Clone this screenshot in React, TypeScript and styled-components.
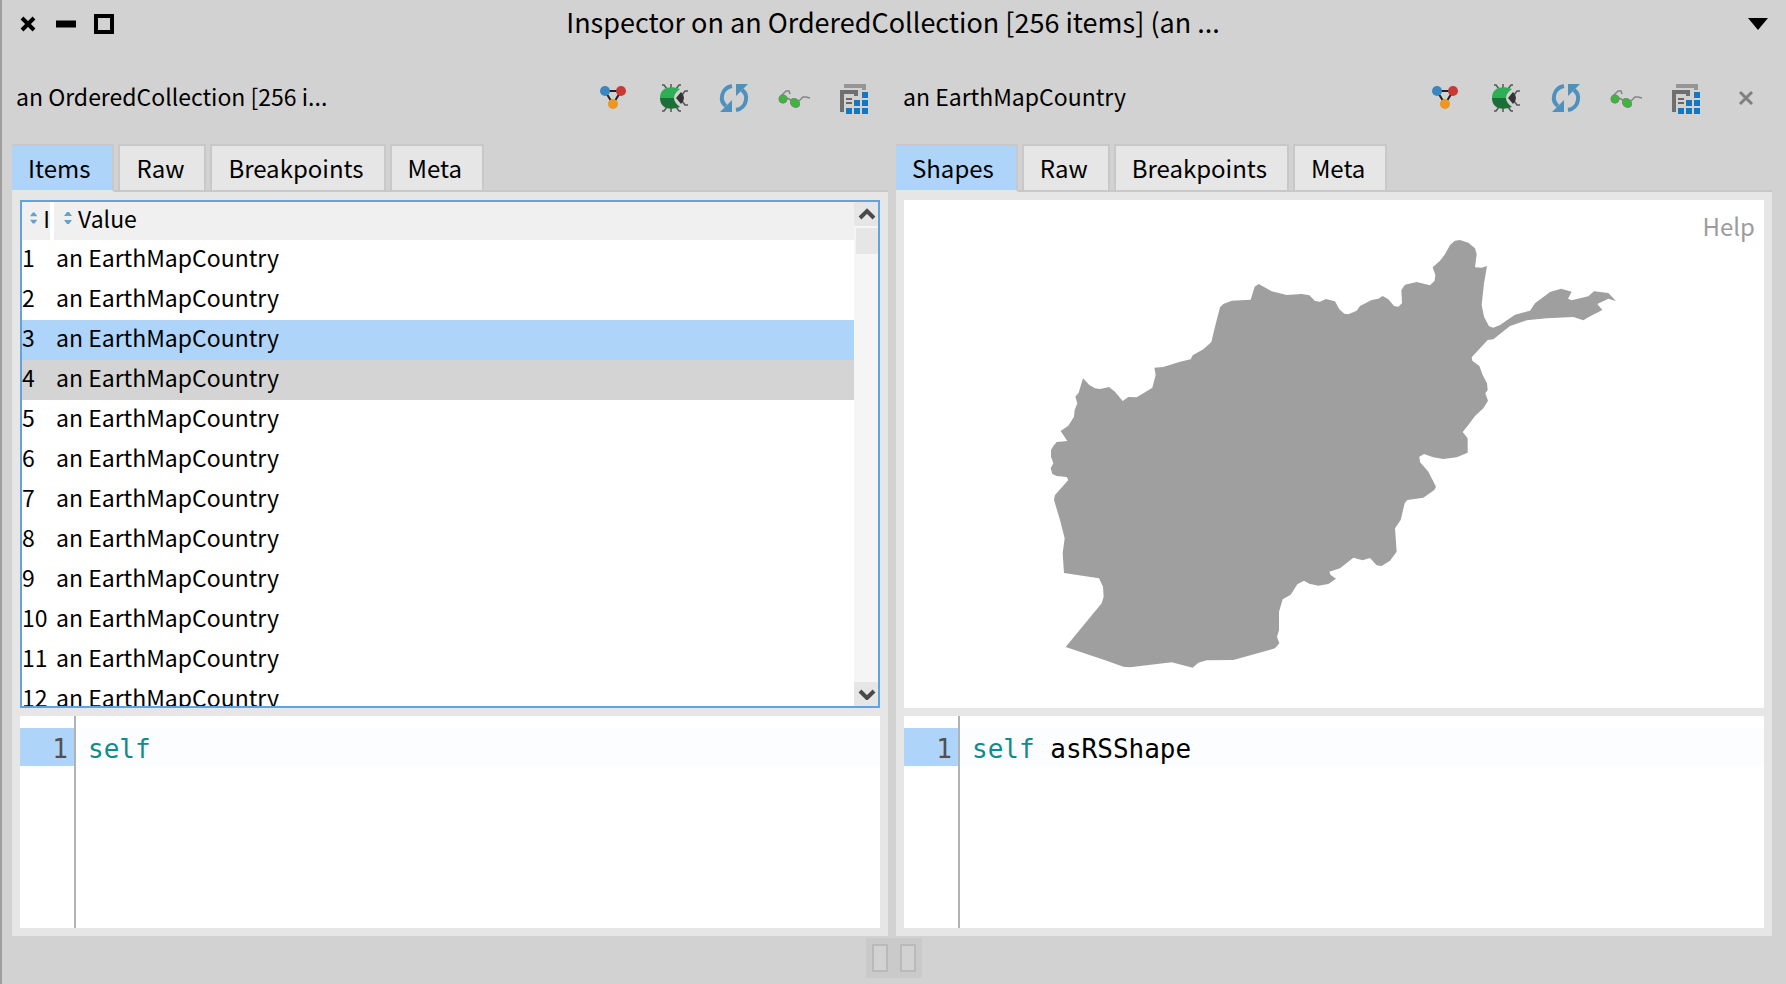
import React from "react";
import styled, { createGlobalStyle, css } from "styled-components";

const Global = createGlobalStyle`
  * { box-sizing: border-box; }
  body { margin: 0; background: #d2d2d2; }
  button { font: inherit; color: inherit; border: 0; padding: 0; background: none; cursor: pointer; }
`;

const Window = styled.main`
  display: flex;
  flex-direction: column;
  height: 100vh;
  border-left: 2px solid #9f9f9f;
  background: #d2d2d2;
  color: #000;
  font-family: "Noto Sans CJK SC", "Open Sans", sans-serif;
  font-size: 24px;
  line-height: 36px;
`;

const TitleBar = styled.header`
  display: grid;
  grid-template-columns: 1fr auto 1fr;
  align-items: center;
  height: 48px;
  padding: 0 18px 0 16px;
`;

const WindowButtons = styled.div`
  display: flex;
  gap: 18px;
`;

const IconButton = styled.button`
  display: flex;
  svg { display: block; }
`;

const WindowTitle = styled.h1`
  margin: 0;
  padding-bottom: 4px;
  font-size: 27px;
  font-weight: 400;
`;

const MenuButton = styled(IconButton)`
  justify-self: end;
`;

const Panes = styled.div`
  flex: 1;
  min-height: 0;
  display: grid;
  grid-template-columns: minmax(0, 1fr) minmax(0, 1fr);
  grid-template-rows: minmax(0, 1fr);
  gap: 8px;
  padding: 0 14px 0 10px;
`;

const Pane = styled.section`
  display: flex;
  flex-direction: column;
  min-height: 0;
`;

const PaneHeader = styled.div<{ $left: number; $right: number }>`
  display: flex;
  align-items: center;
  height: 96px;
  padding: 0 ${(p) => p.$right}px 0 ${(p) => p.$left}px;
`;

const PaneTitle = styled.h2`
  flex: 1;
  margin: 0;
  font-size: 23px;
  font-weight: 400;
  white-space: nowrap;
`;

const Tools = styled.div`
  display: flex;
  gap: 28px;
  padding-top: 4px;
`;

const TabBar = styled.div`
  display: flex;
  gap: 4px;
  flex-shrink: 0;
  height: 48px;
  border-bottom: 2px solid #c8c8c8;
`;

const Tab = styled.button<{ $active?: boolean }>`
  height: 46px;
  padding: 0 20px 0 16px;
  border: 2px solid #c8c8c8;
  border-bottom: 0;
  background: #e6e6e6;
  ${(p) =>
    p.$active &&
    css`
      height: 48px;
      padding-right: 22px;
      border-left: 0;
      border-bottom: 2px solid #e6e6e6;
      background: #aed4fa;
    `}
`;

const Page = styled.div`
  flex: 1;
  min-height: 0;
  display: grid;
  grid-template-rows: minmax(0, 508fr) minmax(0, 212fr);
  gap: 8px;
  padding: 8px;
  background: #e6e6e6;
`;

const ListBox = styled.div`
  display: flex;
  min-height: 0;
  border: 2px solid #61a3e0;
  background: #fff;
`;

const ListView = styled.div`
  flex: 1;
  overflow: hidden;
`;

const List = styled.table`
  width: 100%;
  table-layout: fixed;
  border-spacing: 0;
  font-size: 23px;
  line-height: 34px;
  text-align: left;
`;

const ColumnHead = styled.th<{ $first?: boolean }>`
  width: ${(p) => (p.$first ? "32px" : "auto")};
  height: 38px;
  padding: 0 0 0 ${(p) => (p.$first ? 8 : 10)}px;
  font-weight: 400;
  background: #f0f0f0;
  ${(p) => p.$first && "border-right: 4px solid #fff;"}
`;

const SortLabel = styled.div`
  display: flex;
  align-items: center;
  gap: 6px;
  height: 38px;
  padding-bottom: 6px;
  overflow: hidden;
`;

const Row = styled.tr<{ $state?: string }>`
  height: 40px;
  background: ${(p) => (p.$state === "selected" ? "#aed4fa" : p.$state === "hover" ? "#d4d4d4" : "#fff")};
`;

const Cell = styled.td<{ $value?: boolean }>`
  padding: 0 0 0 ${(p) => (p.$value ? 2 : 0)}px;
  vertical-align: top;
  white-space: nowrap;
`;

const ScrollBar = styled.div`
  display: flex;
  flex-direction: column;
  width: 24px;
  background: #f5f5f5;
`;

const ScrollButton = styled.button`
  display: flex;
  align-items: center;
  justify-content: center;
  height: 24px;
  padding-left: 2px;
  background: #e6e6e6;
`;

const ScrollTrack = styled.div`
  flex: 1;
  padding: 2px 0 0 2px;
`;

const Thumb = styled.div`
  height: 26px;
  background: #e6e6e6;
`;

const Canvas = styled.div`
  position: relative;
  min-height: 0;
  background: #fff;
`;

const Drawing = styled.svg`
  display: block;
  width: 100%;
  height: 100%;
`;

const Help = styled.button`
  position: absolute;
  top: 8px;
  right: 9px;
  color: #9c9c9c;
`;

const Editor = styled.div`
  display: flex;
  background: #fff;
  font-family: "DejaVu Sans Mono", monospace;
  font-size: 26px;
  line-height: 34px;
`;

const Gutter = styled.div`
  width: 56px;
  padding-top: 12px;
  border-right: 2px solid #b2b2b2;
`;

const LineNumber = styled.div`
  height: 38px;
  padding: 4px 6px 0 0;
  text-align: right;
  color: #505050;
  background: #aed4fa;
`;

const Code = styled.code`
  flex: 1;
  height: 38px;
  margin-top: 12px;
  padding: 4px 0 0 12px;
  font-family: inherit;
  background: #fbfdff;
  white-space: pre;
`;

const Keyword = styled.span`
  color: #0f8b8b;
`;

const Footer = styled.footer`
  display: flex;
  justify-content: center;
  height: 48px;
  padding: 2px 0 6px;
`;

const Grip = styled.div`
  display: flex;
  gap: 12px;
  height: 40px;
  padding: 6px;
  background: #cacaca;
`;

const GripHandle = styled.button`
  width: 16px;
  height: 28px;
  border: 2px solid #bababa;
  background: #d2d2d2;
`;

const GraphIcon = () => (
  <svg width="32" height="32" viewBox="0 0 32 32">
    <path d="M7 9H23L15 22Z" fill="none" stroke="#222" strokeWidth="2" />
    <circle cx="7" cy="9" r="5" fill="#3a86c0" />
    <circle cx="23" cy="9" r="5" fill="#c93a35" />
    <circle cx="15" cy="22" r="5" fill="#ec9722" />
  </svg>
);

const BugIcon = () => (
  <svg width="32" height="32" viewBox="0 0 32 32">
    <path
      d="M4 3H6L9 7M13 2V6M23 3H21L18 7M4 29H6L9 25M13 30V26M23 29H21L18 25M30 9H27L24 13M30 23H27L24 19"
      fill="none"
      stroke="#555"
      strokeWidth="1.500"
    />
    <path d="M18 16L23 10Q29 16 23 22Z" fill="#333" />
    <path d="M2 16C2 6 11 3 22 7C18 10 16 13 16 16Z" fill="#2fae55" />
    <path d="M2 16C2 26 11 29 22 25C18 22 16 19 16 16Z" fill="#1d6f38" />
  </svg>
);

const RefreshIcon = () => (
  <svg width="32" height="32" viewBox="0 0 32 32">
    <path d="M14 4C3 6 1 19 8 24M18 28C29 26 31 13 24 8" fill="none" stroke="#4f91bc" strokeWidth="4" />
    <path d="M2 30H14V18Z M30 2H18V14Z" fill="#4f91bc" />
  </svg>
);

const GlassesIcon = () => (
  <svg width="32" height="32" viewBox="0 0 32 32">
    <path d="M3 14L8 9H11L12 12M9 16L13 18M21 19L25 15H28L32 16" fill="none" stroke="#858585" strokeWidth="1.500" />
    <ellipse cx="5" cy="17" rx="4" ry="4" fill="#3fb53f" stroke="#5b8f5b" transform="rotate(40 5 17)" />
    <ellipse cx="17" cy="21" rx="5" ry="4" fill="#3fb53f" stroke="#5b8f5b" transform="rotate(40 17 21)" />
  </svg>
);

const InspectIcon = () => (
  <svg width="32" height="32" viewBox="0 0 32 32">
    <path d="M6 2H28V8H24V6H6Z" fill="#969696" />
    <path d="M2 8H20V14H16V12H6V30H2Z" fill="#6f6f6f" />
    <path d="M8 17H14M8 21H14" stroke="#444" strokeWidth="1.500" />
    <path
      d="M24 10h6v6h-6zM16 18h6v6h-6zM24 18h6v6h-6zM8 26h6v6h-6zM16 26h6v6h-6zM24 26h6v6h-6z"
      fill="#1079c4"
    />
  </svg>
);

const CloseIcon = () => (
  <svg width="32" height="32" viewBox="0 0 32 32">
    <path d="M10 10L22 22M22 10L10 22" stroke="#808080" strokeWidth="3" />
  </svg>
);

const SortIcon = () => (
  <svg width="8" height="16" viewBox="0 0 8 16">
    <path d="M0 6L3 2H5L8 6ZM0 10L3 14H5L8 10Z" fill="#62a4ca" />
  </svg>
);

const COUNTRY = `M205 780L200 771 170 768 157 762 152 745 160 730 153 710 153 690 160 678 170 666 202 663
182 633 205 617 222 590 224 570 232 550 226 530 236 518 249 475 268 495 285 505 300 507 327 501 345 515
368 543 385 531 410 532 435 517 457 503 467 465 463 443 490 441 540 425 572 418 578 406 610 388 634 366
645 320 660 262 670 252 695 242 752 239 764 200 776 192 815 214 860 225 905 222 928 226 945 243 960 245
978 237 1005 244 1018 268 1033 281 1045 283 1070 272 1080 258 1115 240 1135 236 1148 228 1165 238 1182 258
1195 260 1206 250 1204 210 1215 194 1250 186 1290 196 1304 182 1306 165 1298 142 1320 122 1335 103 1350 75
1365 62 1380 60 1405 68 1425 85 1430 103 1425 142 1445 143 1461 138 1452 190 1445 255 1452 290 1467 319
1480 323 1500 315 1545 284 1590 272 1605 250 1650 216 1683 206 1715 215 1704 236 1715 241 1765 229 1782 214
1825 219 1848 243 1825 236 1792 252 1807 270 1765 292 1750 301 1720 291 1640 295 1580 301 1530 318 1480 358
1463 360 1415 412 1417 422 1438 438 1448 465 1461 490 1463 510 1456 520 1464 542 1450 565 1425 588 1405 615
1388 636 1403 655 1403 698 1370 712 1330 717 1300 712 1272 702 1258 710 1260 726 1285 755 1308 800 1303 810
1270 833 1222 840 1214 850 1202 900 1185 925 1190 995 1170 1022 1145 1038 1130 1036 1110 1014 1088 1021
1060 1013 1020 1045 988 1055 992 1065 1008 1076 985 1092 955 1097 928 1091 912 1082 892 1093 872 1124
848 1138 837 1175 837 1230 831 1250 838 1270 825 1285 700 1320 620 1321 595 1328 578 1343 515 1327 440 1336
390 1342 370 1340 320 1322 197 1281 305 1150 311 1130 309 1100 297 1075 192 1059 188 1000 194 955 180 900
162 840 165 825Z`;

const tools: [string, () => React.ReactElement][] = [
  ["Graph", GraphIcon],
  ["Debug", BugIcon],
  ["Refresh", RefreshIcon],
  ["Browse", GlassesIcon],
  ["Inspect", InspectIcon],
];

function Toolbar({ closable }: { closable?: boolean }) {
  const items = closable ? [...tools, ["Close", CloseIcon] as (typeof tools)[number]] : tools;
  return (
    <Tools>
      {items.map(([label, Icon]) => (
        <IconButton key={label} aria-label={label}>
          <Icon />
        </IconButton>
      ))}
    </Tools>
  );
}

function Tabs({ labels }: { labels: string[] }) {
  return (
    <TabBar role="tablist">
      {labels.map((label, i) => (
        <Tab key={label} role="tab" aria-selected={i === 0} $active={i === 0}>
          {label}
        </Tab>
      ))}
    </TabBar>
  );
}

function CodeEditor({ rest }: { rest?: string }) {
  return (
    <Editor>
      <Gutter>
        <LineNumber>1</LineNumber>
      </Gutter>
      <Code>
        <Keyword>self</Keyword>
        {rest}
      </Code>
    </Editor>
  );
}

const rows = Array.from({ length: 12 }, (_, i) => i + 1);
const rowState: Record<number, string> = { 3: "selected", 4: "hover" };

export default function App() {
  return (
    <>
      <Global />
      <Window>
        <TitleBar>
          <WindowButtons>
            <IconButton aria-label="Close window">
              <svg width="20" height="20" viewBox="0 0 20 20">
                <path d="M4 4L16 16M16 4L4 16" stroke="#000" strokeWidth="4" />
              </svg>
            </IconButton>
            <IconButton aria-label="Minimize">
              <svg width="20" height="20" viewBox="0 0 20 20">
                <path d="M0 10H20" stroke="#000" strokeWidth="7" />
              </svg>
            </IconButton>
            <IconButton aria-label="Maximize">
              <svg width="20" height="20" viewBox="0 0 20 20">
                <path d="M2 2H18V18H2Z" fill="none" stroke="#000" strokeWidth="4" />
              </svg>
            </IconButton>
          </WindowButtons>
          <WindowTitle>Inspector on an OrderedCollection [256 items] (an ...</WindowTitle>
          <MenuButton aria-label="Window menu">
            <svg width="20" height="12" viewBox="0 0 20 12">
              <path d="M0 0H20L10 12Z" />
            </svg>
          </MenuButton>
        </TitleBar>
        <Panes>
          <Pane>
            <PaneHeader $left={4} $right={18}>
              <PaneTitle>an OrderedCollection [256 i...</PaneTitle>
              <Toolbar />
            </PaneHeader>
            <Tabs labels={["Items", "Raw", "Breakpoints", "Meta"]} />
            <Page>
              <ListBox>
                <ListView>
                  <List>
                    <thead>
                      <tr>
                        <ColumnHead $first>
                          <SortLabel>
                            <SortIcon />I
                          </SortLabel>
                        </ColumnHead>
                        <ColumnHead>
                          <SortLabel>
                            <SortIcon />
                            Value
                          </SortLabel>
                        </ColumnHead>
                      </tr>
                    </thead>
                    <tbody>
                      {rows.map((n) => (
                        <Row key={n} $state={rowState[n]}>
                          <Cell>{n}</Cell>
                          <Cell $value>an EarthMapCountry</Cell>
                        </Row>
                      ))}
                    </tbody>
                  </List>
                </ListView>
                <ScrollBar>
                  <ScrollButton aria-label="Scroll up">
                    <svg width="20" height="12" viewBox="0 0 20 12">
                      <path d="M3 10L10 3L17 10" fill="none" stroke="#4a4a4a" strokeWidth="4" />
                    </svg>
                  </ScrollButton>
                  <ScrollTrack>
                    <Thumb />
                  </ScrollTrack>
                  <ScrollButton aria-label="Scroll down">
                    <svg width="20" height="12" viewBox="0 0 20 12">
                      <path d="M3 3L10 10L17 3" fill="none" stroke="#4a4a4a" strokeWidth="4" />
                    </svg>
                  </ScrollButton>
                </ScrollBar>
              </ListBox>
              <CodeEditor />
            </Page>
          </Pane>
          <Pane>
            <PaneHeader $left={7} $right={10}>
              <PaneTitle>an EarthMapCountry</PaneTitle>
              <Toolbar closable />
            </PaneHeader>
            <Tabs labels={["Shapes", "Raw", "Breakpoints", "Meta"]} />
            <Page>
              <Canvas>
                <Drawing viewBox="-288 -60 2580 1524" aria-label="Country shape">
                  <path d={COUNTRY} fill="#9f9f9f" />
                </Drawing>
                <Help>Help</Help>
              </Canvas>
              <CodeEditor rest=" asRSShape" />
            </Page>
          </Pane>
        </Panes>
        <Footer>
          <Grip>
            <GripHandle aria-label="First pane" />
            <GripHandle aria-label="Second pane" />
          </Grip>
        </Footer>
      </Window>
    </>
  );
}
